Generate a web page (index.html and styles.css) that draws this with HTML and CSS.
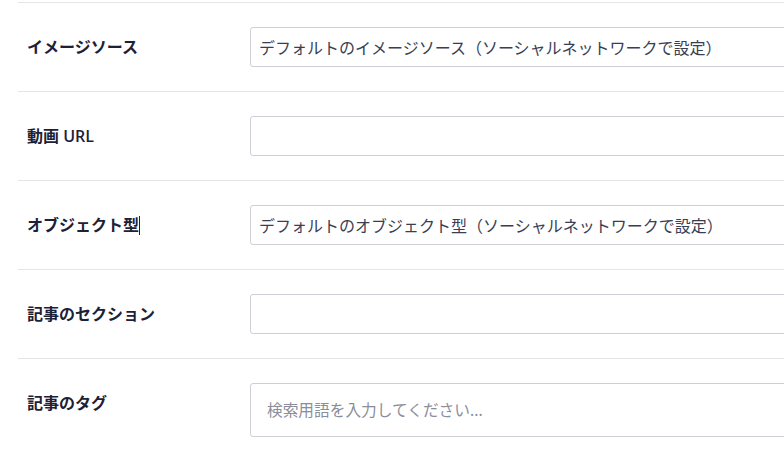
FILE: index.html
```html
<!DOCTYPE html>
<html lang="ja">
<head>
<meta charset="utf-8">
<link rel="stylesheet" href="styles.css">
</head>
<body>
<div class="form">
  <div class="row">
    <div class="label">イメージソース</div>
    <div class="field"><input class="input" type="text" value="デフォルトのイメージソース（ソーシャルネットワークで設定）"></div>
  </div>
  <div class="row">
    <div class="label">動画 URL</div>
    <div class="field"><input class="input" type="text" value=""></div>
  </div>
  <div class="row">
    <div class="label">オブジェクト型<span class="caret"></span></div>
    <div class="field"><input class="input" type="text" value="デフォルトのオブジェクト型（ソーシャルネットワークで設定）"></div>
  </div>
  <div class="row">
    <div class="label">記事のセクション</div>
    <div class="field"><input class="input" type="text" value=""></div>
  </div>
  <div class="row">
    <div class="label">記事のタグ</div>
    <div class="field"><input class="input tags" type="text" placeholder="検索用語を入力してください..."></div>
  </div>
</div>
</body>
</html>
```
FILE: styles.css
```css
html, body {
  margin: 0;
  padding: 0;
  background: #ffffff;
  overflow: hidden;
}
body {
  font-family: "Noto Sans", "Noto Sans CJK JP", sans-serif;
  color: #1d2136;
}
.form {
  margin-left: 18px;
  padding-top: 2px;
  width: 1000px;
}
.row {
  display: grid;
  grid-template-columns: 232px 1fr;
  align-items: start;
  border-top: 1px solid #e4e5e9;
  padding: 24px 0;
}
.label {
  padding-left: 9px;
  font-family: "Open Sans", "Noto Sans CJK JP", sans-serif;
  font-size: 16px;
  font-weight: 600;
  line-height: 40px;
  color: #1d2136;
  display: flex;
  align-items: center;
}
.caret {
  display: inline-block;
  width: 1px;
  height: 19px;
  background: #1d2136;
}
.field {
  display: flex;
}
.input {
  box-sizing: border-box;
  width: 100%;
  height: 40px;
  border: 1px solid #cdcfd6;
  border-radius: 3px;
  padding: 0 8px;
  font-family: "Noto Sans", "Noto Sans CJK JP", sans-serif;
  font-size: 16px;
  color: #3a3e52;
  background: #fff;
  outline: none;
}
.tags {
  height: 54px;
  padding: 0 16px;
  font-size: 15.7px;
}
.tags::placeholder {
  color: #8a8e9a;
}
```
